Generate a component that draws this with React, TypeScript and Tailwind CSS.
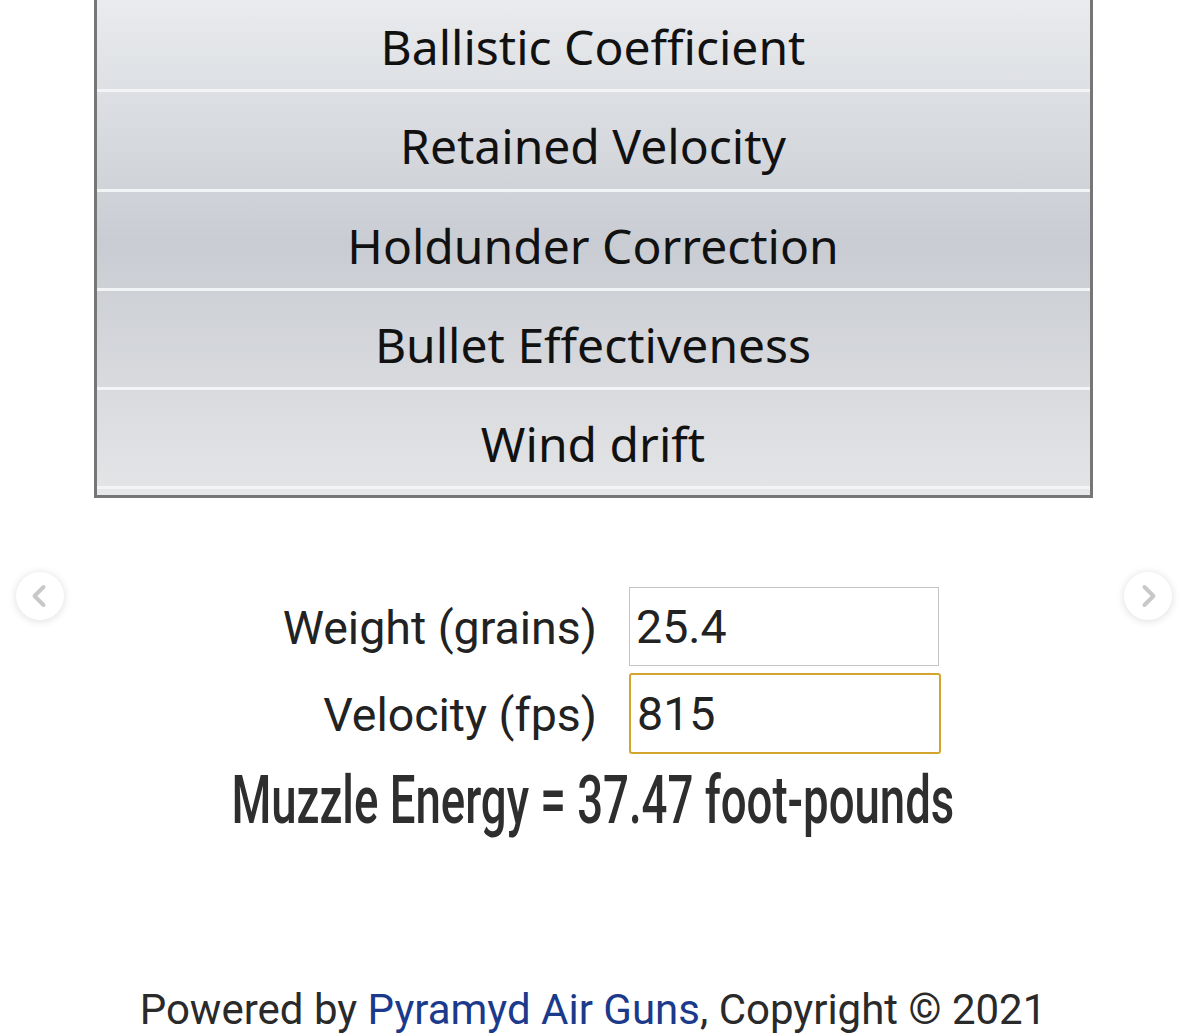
import { ChevronLeft, ChevronRight } from "lucide-react";

const rows = [
  "Ballistic Coefficient",
  "Retained Velocity",
  "Holdunder Correction",
  "Bullet Effectiveness",
  "Wind drift",
];

export default function App() {
  return (
    <div className="relative w-[1186px] h-[1036px] overflow-hidden bg-white">
      {/* Menu table */}
      <div className="-mt-[7px] mx-auto w-[999px] border-x-[3px] border-b-[3px] border-[#767676] bg-linear-to-b from-[#eaecef] via-[#c9ccd2] to-[#e4e5e7]">
        {rows.map((r) => (
          <div
            key={r}
            className="h-[99.3px] border-b-[3px] border-[#f3f4f5] flex items-center justify-center pt-[12px] text-[48px] text-[#111] font-['Noto_Sans',sans-serif]"
          >
            {r}
          </div>
        ))}
        <div className="h-[6px] bg-[#e6e7e8]" />
      </div>

      {/* Calculator */}
      <div className="mt-[89px] flex flex-col gap-[7px] font-['Roboto',sans-serif] text-[46.5px] text-[#222]">
        <div className="flex items-center">
          <div className="w-[597px] text-right pt-[4px]">Weight (grains)</div>
          <div className="ml-[32px] w-[310px] h-[79px] border border-[#c4c4c4] flex items-center pl-[6px] leading-none">
            25.4
          </div>
        </div>
        <div className="flex items-center">
          <div className="w-[597px] text-right pt-[4px]">Velocity (fps)</div>
          <div className="ml-[32px] w-[312px] h-[81px] border-2 border-[#d4a52c] rounded-[3px] flex items-center pl-[6px] leading-none">
            815
          </div>
        </div>
      </div>

      <div className="mt-[5px] flex justify-center">
        <span className="inline-block scale-x-[0.69] font-['Roboto',sans-serif] font-medium text-[66px] leading-[84px] text-[#2e2e2e] whitespace-nowrap">
          Muzzle Energy = 37.47 foot-pounds
        </span>
      </div>

      <div className="mt-[143px] text-center font-['Roboto',sans-serif] text-[42px] leading-[48px] text-[#2a2a2a] whitespace-nowrap">
        Powered by <span className="text-[#1b3a8c]">Pyramyd Air Guns</span>, Copyright © 2021
      </div>

      {/* Carousel arrows */}
      <div className="absolute left-[16px] top-[572px] w-[48px] h-[48px] rounded-full bg-white shadow-[0_1px_8px_rgba(0,0,0,0.14)] flex items-center justify-center">
        <ChevronLeft className="w-[36px] h-[36px] -ml-[2px] text-[#c8c8c8]" strokeWidth={2.6} />
      </div>
      <div className="absolute left-[1124px] top-[572px] w-[48px] h-[48px] rounded-full bg-white shadow-[0_1px_8px_rgba(0,0,0,0.14)] flex items-center justify-center">
        <ChevronRight className="w-[36px] h-[36px] ml-[2px] text-[#c8c8c8]" strokeWidth={2.6} />
      </div>
    </div>
  );
}
